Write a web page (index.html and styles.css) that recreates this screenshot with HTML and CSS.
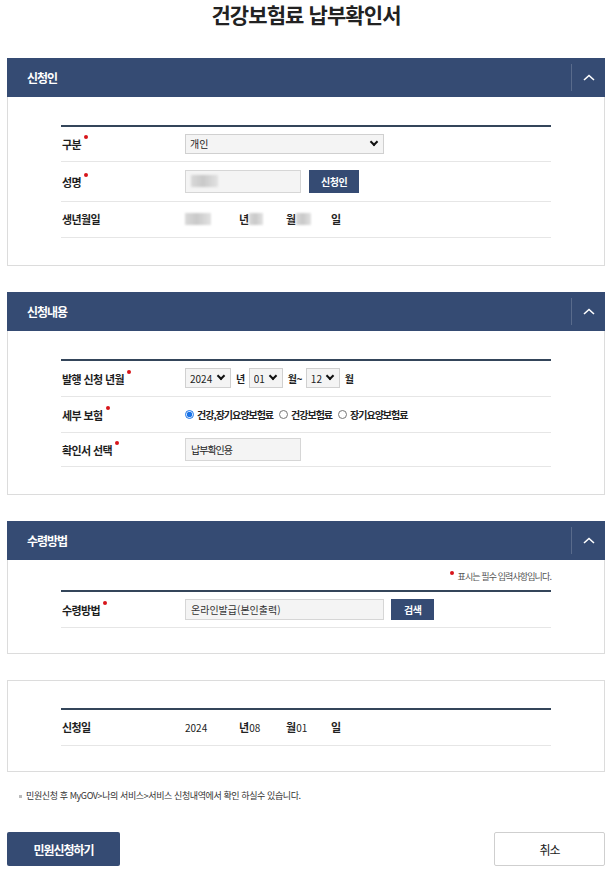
FILE: index.html
```html
<!DOCTYPE html>
<html lang="ko">
<head>
    <meta charset="UTF-8">
    <meta name="viewport" content="width=device-width, initial-scale=1.0">
    <title>건강보험료 납부확인서</title>
    <link rel="stylesheet" href="styles.css">
</head>
<body>
    <h1 class="page-title">건강보험료 납부확인서</h1>

    <section class="panel">
        <div class="panel-head">
            <h2>신청인</h2>
            <button class="fold" type="button">
                <svg width="12" height="7" viewBox="0 0 12 7"><polyline points="1,6 6,1.5 11,6" fill="none" stroke="#fff" stroke-width="1.6"/></svg>
            </button>
        </div>
        <div class="panel-body">
            <table class="form-table">
                <tr class="h35">
                    <th><span class="req">구분</span></th>
                    <td>
                        <span class="select-box w199">
                            <select><option>개인</option></select>
                        </span>
                    </td>
                </tr>
                <tr class="h40">
                    <th><span class="req">성명</span></th>
                    <td>
                        <div class="inline">
                            <div class="fake-input w116"><span class="blur" style="width:27px"></span></div>
                            <button class="btn-sm" type="button">신청인</button>
                        </div>
                    </td>
                </tr>
                <tr class="h36">
                    <th>생년월일</th>
                    <td>
                        <div class="date">
                            <span class="seg s1"><span class="blur" style="width:26px"></span></span>
                            <span class="seg s2"><b>년</b><span class="blur" style="width:14px"></span></span>
                            <span class="seg s3"><b>월</b><span class="blur" style="width:15px"></span></span>
                            <span class="seg"><b>일</b></span>
                        </div>
                    </td>
                </tr>
            </table>
        </div>
    </section>

    <section class="panel">
        <div class="panel-head">
            <h2>신청내용</h2>
            <button class="fold" type="button">
                <svg width="12" height="7" viewBox="0 0 12 7"><polyline points="1,6 6,1.5 11,6" fill="none" stroke="#fff" stroke-width="1.6"/></svg>
            </button>
        </div>
        <div class="panel-body">
            <table class="form-table">
                <tr class="h37">
                    <th><span class="req">발행 신청 년월</span></th>
                    <td>
                        <div class="inline">
                            <span class="select-box w46"><select><option>2024</option></select></span>
                            <b class="unit">년</b>
                            <span class="select-box w34"><select><option>01</option></select></span>
                            <b class="unit">월~</b>
                            <span class="select-box w34"><select><option>12</option></select></span>
                            <b class="unit">월</b>
                        </div>
                    </td>
                </tr>
                <tr class="h36">
                    <th><span class="req">세부 보험</span></th>
                    <td>
                        <div class="radios">
                            <label><input type="radio" name="ins" checked>건강,장기요양보험료</label>
                            <label><input type="radio" name="ins">건강보험료</label>
                            <label><input type="radio" name="ins">장기요양보험료</label>
                        </div>
                    </td>
                </tr>
                <tr class="h34">
                    <th><span class="req">확인서 선택</span></th>
                    <td><div class="fake-input w116">납부확인용</div></td>
                </tr>
            </table>
        </div>
    </section>

    <section class="panel">
        <div class="panel-head">
            <h2>수령방법</h2>
            <button class="fold" type="button">
                <svg width="12" height="7" viewBox="0 0 12 7"><polyline points="1,6 6,1.5 11,6" fill="none" stroke="#fff" stroke-width="1.6"/></svg>
            </button>
        </div>
        <div class="panel-body has-note">
            <p class="req-note"><i class="dot"></i>표시는 필수 입력사항입니다.</p>
            <table class="form-table">
                <tr class="h36">
                    <th><span class="req">수령방법</span></th>
                    <td>
                        <div class="inline">
                            <div class="fake-input w199 normal">온라인발급(본인출력)</div>
                            <button class="btn-sm" type="button">검색</button>
                        </div>
                    </td>
                </tr>
            </table>
        </div>
    </section>

    <section class="panel boxed">
        <div class="panel-body">
            <table class="form-table">
                <tr class="h37">
                    <th>신청일</th>
                    <td>
                        <div class="date">
                            <span class="seg s1">2024</span>
                            <span class="seg s2"><b>년</b>08</span>
                            <span class="seg s3"><b>월</b>01</span>
                            <span class="seg"><b>일</b></span>
                        </div>
                    </td>
                </tr>
            </table>
        </div>
    </section>

    <p class="foot-note">민원신청 후 MyGOV&gt;나의 서비스&gt;서비스 신청내역에서 확인 하실수 있습니다.</p>

    <div class="actions">
        <button class="btn-submit" type="button">민원신청하기</button>
        <button class="btn-cancel" type="button">취소</button>
    </div>
</body>
</html>
```

FILE: styles.css
```css
body {
    margin: 0;
    padding: 0 8px 0 7px;
    background: #fff;
    color: #222;
    font-family: "Noto Sans CJK KR", "Noto Sans", sans-serif;
}

.page-title {
    margin: 0;
    height: 28px;
    line-height: 28px;
    font-size: 21px;
    font-weight: bold;
    letter-spacing: -0.9px;
    text-align: center;
    color: #222;
}

.panel {
    margin-top: 26px;
}

.page-title + .panel {
    margin-top: 30px;
}

.panel-head {
    display: flex;
    align-items: stretch;
    height: 39px;
    background: #354b73;
}

.panel-head h2 {
    flex: 1;
    margin: 0;
    padding-left: 20px;
    line-height: 39px;
    font-size: 12px;
    font-weight: bold;
    letter-spacing: -1px;
    color: #fff;
}

.fold {
    width: 34px;
    margin: 6px 0;
    padding: 0;
    border: 0;
    border-left: 1px solid rgba(255, 255, 255, 0.18);
    background: none;
    display: flex;
    align-items: center;
    justify-content: center;
}

.panel-body {
    padding: 28px 53px 27px;
    border: 1px solid #dcdcdc;
    border-top: 0;
}

.panel.boxed .panel-body {
    border-top: 1px solid #dcdcdc;
    padding-top: 27px;
    padding-bottom: 25px;
}

.panel-body.has-note {
    padding-top: 10px;
    padding-bottom: 25px;
}

.req-note {
    margin: 0 0 6px;
    height: 14px;
    line-height: 14px;
    font-size: 9px;
    letter-spacing: -0.9px;
    color: #555;
    text-align: right;
}

.req-note .dot {
    display: inline-block;
    width: 4px;
    height: 4px;
    margin-right: 4px;
    border-radius: 50%;
    background: #d7151a;
    vertical-align: 5px;
}

.form-table {
    width: 100%;
    border-collapse: collapse;
    border-top: 2px solid #34455a;
}

.form-table tr {
    border-bottom: 1px solid #e6e6e6;
}

.form-table tr.h34 { height: 34px; }
.form-table tr.h35 { height: 35px; }
.form-table tr.h36 { height: 36px; }
.form-table tr.h37 { height: 37px; }
.form-table tr.h40 { height: 40px; }

.form-table th {
    width: 123px;
    padding: 0 0 0 1px;
    text-align: left;
    vertical-align: middle;
    font-size: 11px;
    font-weight: bold;
    letter-spacing: -0.6px;
    color: #1e1e1e;
}

.form-table td {
    padding: 0;
    vertical-align: middle;
    font-size: 10px;
}

.req::after {
    content: "";
    display: inline-block;
    width: 4px;
    height: 4px;
    margin-left: 3px;
    border-radius: 50%;
    background: #d7151a;
    vertical-align: 10px;
}

.inline {
    display: flex;
    align-items: center;
}

.select-box {
    position: relative;
    display: inline-block;
    height: 20px;
}

.select-box select {
    appearance: none;
    -webkit-appearance: none;
    width: 100%;
    height: 20px;
    margin: 0;
    padding: 0 0 0 4px;
    border: 1px solid #d0d0d0;
    border-radius: 0;
    background: #f4f4f4;
    font-family: inherit;
    font-size: 10px;
    color: #222;
}

.select-box::after {
    content: "";
    position: absolute;
    right: 7px;
    top: 5px;
    width: 4px;
    height: 4px;
    border-right: 2px solid #111;
    border-bottom: 2px solid #111;
    transform: rotate(45deg);
    pointer-events: none;
}

.w199 { width: 199px; }
.w116 { width: 116px; }
.w46 { width: 46px; }
.w34 { width: 34px; }

.unit {
    margin: 0 4px 0 5px;
    font-size: 10px;
    font-weight: bold;
    letter-spacing: -0.5px;
}

.fake-input {
    box-sizing: border-box;
    display: flex;
    align-items: center;
    height: 23px;
    padding-left: 5px;
    border: 1px solid #d6d6d6;
    background: #f4f4f4;
    font-size: 10px;
    letter-spacing: -1px;
    color: #222;
}

.fake-input.normal {
    height: 21px;
    letter-spacing: 0;
    color: #333;
}

.blur {
    display: inline-block;
    height: 12px;
    background: linear-gradient(90deg, #d9d9d9, #c9c9c9 45%, #e2e2e2);
    filter: blur(1px);
}

.btn-sm {
    height: 23px;
    margin-left: 8px;
    padding: 0 12px;
    border: 0;
    background: #354b73;
    color: #fff;
    font-family: inherit;
    font-size: 10px;
    font-weight: bold;
    letter-spacing: -0.5px;
}

.fake-input.normal + .btn-sm {
    height: 21px;
    margin-left: 7px;
    padding: 0 13px;
}

.date {
    display: flex;
    align-items: center;
    font-size: 10px;
}

.date b {
    font-size: 11px;
    font-weight: bold;
}

.date .seg {
    display: flex;
    align-items: center;
}

.date .s1 { width: 54px; }
.date .s2 { width: 47px; }
.date .s3 { width: 45px; }

.radios {
    display: flex;
    align-items: center;
}

.radios label {
    display: flex;
    align-items: center;
    margin-right: 6px;
    font-size: 10px;
    font-weight: bold;
    letter-spacing: -1px;
    color: #222;
}

.radios input {
    width: 9px;
    height: 9px;
    margin: 0 3px 0 0;
    accent-color: #1a73e8;
}

.foot-note {
    position: relative;
    margin: 17px 0 0;
    padding-left: 19px;
    height: 14px;
    line-height: 14px;
    font-size: 9px;
    letter-spacing: -0.4px;
    color: #333;
}

.foot-note::before {
    content: "";
    position: absolute;
    left: 12px;
    top: 6px;
    width: 3px;
    height: 3px;
    background: #bbb;
}

.actions {
    display: flex;
    justify-content: space-between;
    margin-top: 29px;
}

.btn-submit,
.btn-cancel {
    height: 34px;
    font-family: inherit;
    font-size: 12px;
    letter-spacing: -1px;
}

.btn-submit {
    width: 113px;
    border: 0;
    border-radius: 2px;
    background: #354b73;
    color: #fff;
    font-weight: bold;
}

.btn-cancel {
    width: 111px;
    border: 1px solid #cfcfcf;
    border-radius: 2px;
    background: #fff;
    color: #222;
}
```
